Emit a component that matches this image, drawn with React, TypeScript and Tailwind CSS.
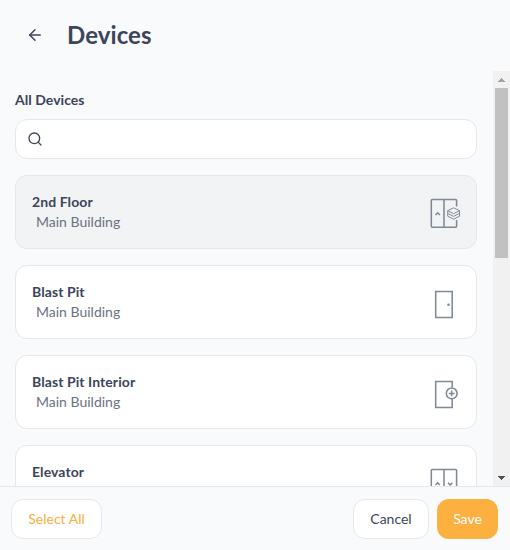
import type { ReactNode } from "react";
import { ArrowLeft, Search } from "lucide-react";

type DeviceKind = "floor" | "door" | "interior" | "elevator";

interface Device {
  name: string;
  location: string;
  kind: DeviceKind;
  active?: boolean;
}

const devices: Device[] = [
  { name: "2nd Floor", location: "Main Building", kind: "floor", active: true },
  { name: "Blast Pit", location: "Main Building", kind: "door" },
  { name: "Blast Pit Interior", location: "Main Building", kind: "interior" },
  { name: "Elevator", location: "Main Building", kind: "elevator" },
];

const iconPaths: Record<DeviceKind, ReactNode> = {
  floor: (
    <>
      <path d="M26.600 8.500V2.500a1 1 0 0 0-1-1H2.300a1 1 0 0 0-1 1v25.800a1 1 0 0 0 1 1h23.300a1 1 0 0 0 1-1V22M14 1.500v27.800" />
      <path d="m5.500 17 2.200-2.200 2.200 2.200" strokeWidth="1.600" />
      <g strokeWidth="1">
        <path d="m23.600 9.800 5.900 2.900-5.900 3-5.900-3z" />
        <path d="M17.700 12.700v2.700l5.900 3 5.900-3v-2.700M17.700 15.400v2.800l5.900 3 5.900-3v-2.800" />
      </g>
    </>
  ),
  door: (
    <>
      <path d="M5.700 3.400h16.500v26H5.700z" />
      <circle cx="18.500" cy="16.800" r="1.300" fill="currentColor" stroke="none" />
    </>
  ),
  interior: (
    <>
      <path d="M22.200 9.600V3.400H5.700v26h16.500v-8.300" />
      <circle cx="21.700" cy="15.400" r="5.400" />
      <path d="M21.700 12.500v5.800M18.800 15.400h5.800" />
    </>
  ),
  elevator: (
    <>
      <rect x="1.300" y="1.500" width="25.300" height="27.800" rx="1" />
      <path d="M14 1.500v27.800M5.500 17l2.200-2.200L9.900 17M18 14.800l2.200 2.200 2.200-2.200" />
    </>
  ),
};

function DeviceIcon({ kind }: { kind: DeviceKind }) {
  return (
    <svg
      viewBox="0 0 32 32"
      className="mt-1 size-8 shrink-0 text-[#808996]"
      fill="none"
      stroke="currentColor"
      strokeWidth="1.55"
    >
      {iconPaths[kind]}
    </svg>
  );
}

function DeviceCard({ device }: { device: Device }) {
  return (
    <button
      className={`flex h-[74px] w-full shrink-0 items-center justify-between rounded-xl border border-gray-200 pl-4 pr-3.5 text-left ${
        device.active ? "bg-[#f2f3f5]" : "bg-white"
      }`}
    >
      <div className="text-sm leading-5">
        <p className="font-bold tracking-[0.08px] text-[#3c455a]">{device.name}</p>
        <p className="pl-1 text-gray-500">{device.location}</p>
      </div>
      <DeviceIcon kind={device.kind} />
    </button>
  );
}

function Scrollbar() {
  return (
    <div className="flex w-[17px] shrink-0 flex-col items-center bg-[#f1f1f1]">
      <div className="flex h-[17px] items-center">
        <svg width="7" height="4" viewBox="0 0 7 4" fill="#a3a3a3" shapeRendering="crispEdges">
          <path d="M3 0h1v1h1v1h1v1h1v1H0V3h1V2h1V1h1z" />
        </svg>
      </div>
      <div className="h-[170px] w-[13px] bg-[#c1c1c1]" />
      <div className="mt-auto flex h-[17px] items-center">
        <svg width="7" height="4" viewBox="0 0 7 4" fill="#505050" shapeRendering="crispEdges">
          <path d="M0 0h7v1H6v1H5v1H4v1H3V3H2V2H1V1H0z" />
        </svg>
      </div>
    </div>
  );
}

export default function App() {
  return (
    <div className="flex h-[550px] w-[510px] flex-col overflow-hidden bg-gray-50 font-['Lato',sans-serif] text-[#3c455a]">
      <header className="flex h-[71px] shrink-0 items-center pb-0.5 pl-[26px]">
        <button aria-label="Back">
          <ArrowLeft className="size-[18px]" strokeWidth={2} />
        </button>
        <h1 className="ml-[23px] text-2xl font-bold tracking-[0.08px]">Devices</h1>
      </header>

      <div className="flex min-h-0 flex-1">
        <main className="flex flex-1 flex-col overflow-hidden pl-[15px] pr-4 pt-[19px]">
          <h2 className="text-sm font-bold leading-5 tracking-[0.04px]">All Devices</h2>
          <label className="mt-[9px] flex h-10 shrink-0 items-center gap-2 rounded-xl border border-gray-200 bg-white px-[11px]">
            <Search className="size-4" strokeWidth={2} />
            <input className="min-w-0 flex-1 text-sm outline-none" aria-label="Search devices" />
          </label>
          <div className="mt-4 flex flex-col gap-4">
            {devices.map((device) => (
              <DeviceCard key={device.name} device={device} />
            ))}
          </div>
        </main>
        <Scrollbar />
      </div>

      <footer className="flex h-16 shrink-0 items-start border-t border-gray-200 pl-[11px] pr-3 pt-3 text-sm">
        <button className="h-10 w-[91px] rounded-xl border border-gray-200 bg-white text-[#fbb040]">
          Select All
        </button>
        <button className="ml-auto h-10 w-[76px] rounded-xl border border-gray-200 bg-white">
          Cancel
        </button>
        <button className="ml-2 h-10 w-[61px] rounded-xl bg-[#fbb040] text-white">Save</button>
      </footer>
    </div>
  );
}
